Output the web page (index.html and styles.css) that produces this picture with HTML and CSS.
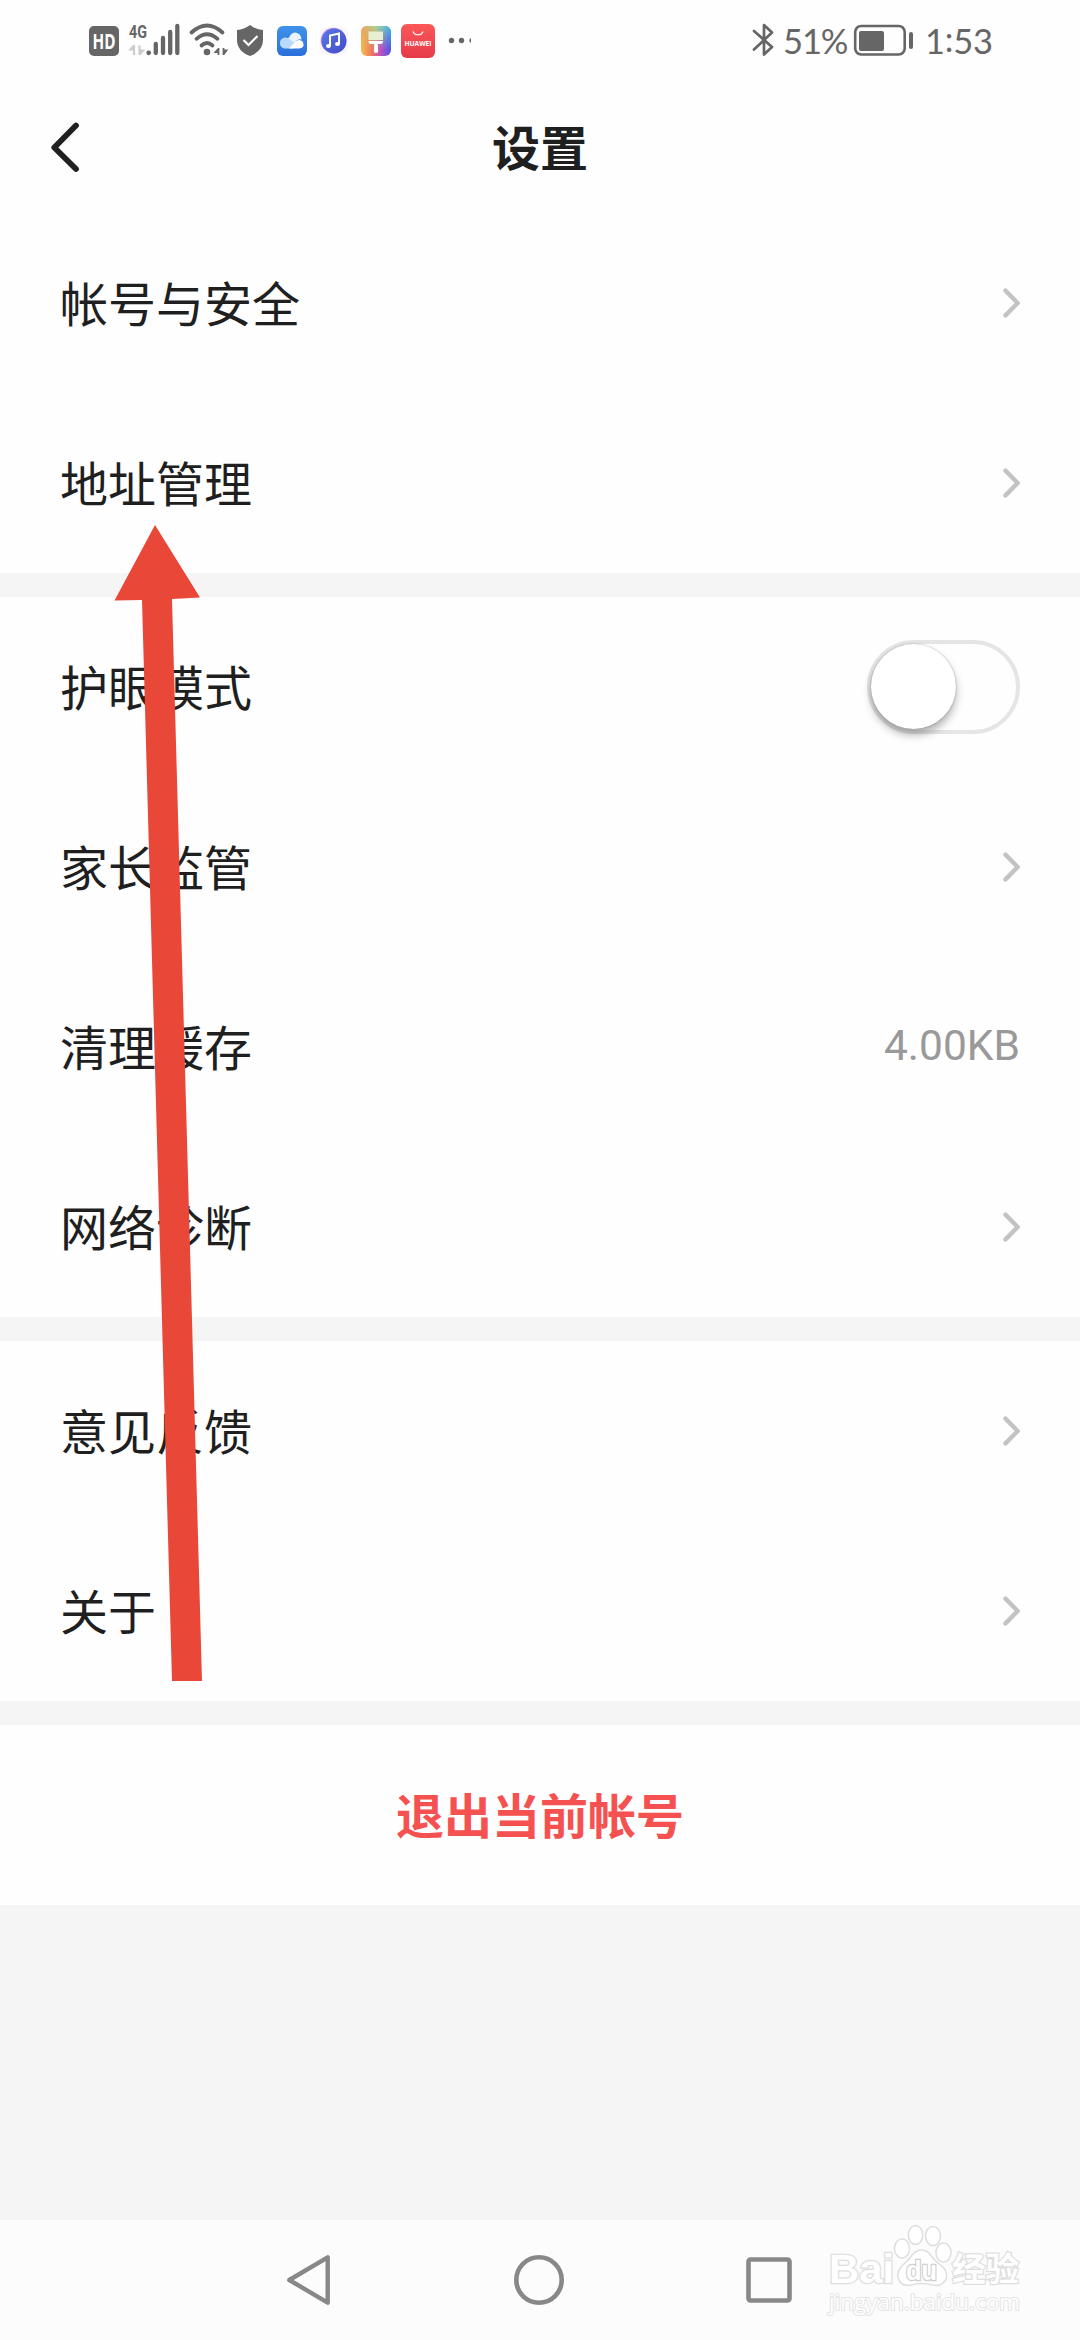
FILE: index.html
```html
<!DOCTYPE html>
<html lang="zh-CN">
<head>
<meta charset="utf-8">
<title>设置</title>
<link rel="stylesheet" href="styles.css">
</head>
<body>
<svg class="defs" width="0" height="0" aria-hidden="true">
  <defs>
    <linearGradient id="blue" x1="0" y1="0" x2="0" y2="1"><stop offset="0" stop-color="#3f93ea"/><stop offset="1" stop-color="#2a6fdc"/></linearGradient>
    <linearGradient id="red" x1="0" y1="0" x2="0" y2="1"><stop offset="0" stop-color="#fb5858"/><stop offset="1" stop-color="#e63a49"/></linearGradient>
    <linearGradient id="music" x1="0" y1="0" x2="1" y2="1"><stop offset="0" stop-color="#5a7be8"/><stop offset="1" stop-color="#4349c4"/></linearGradient>
    <linearGradient id="rainbow" x1="0" y1="0" x2="1" y2="0"><stop offset="0" stop-color="#f5c04c"/><stop offset=".35" stop-color="#f0785c"/><stop offset=".65" stop-color="#c04fc0"/><stop offset="1" stop-color="#4a55e8"/></linearGradient>
    <linearGradient id="rainbow-top" x1="0" y1="0" x2="1" y2="0"><stop offset="0" stop-color="#f0a060"/><stop offset=".5" stop-color="#a8d890"/><stop offset="1" stop-color="#38b8e8"/></linearGradient>
    <linearGradient id="fade" x1="0" y1="0" x2="0" y2="1"><stop offset="0" stop-color="#fff"/><stop offset=".8" stop-color="#000"/></linearGradient>
    <mask id="fade-mask"><rect x="361" y="26" width="30" height="30" fill="url(#fade)"/></mask>
    <symbol id="chevron" viewBox="0 0 18 30"><path d="M3.500 2.600 15.700 15 3.500 27.400" fill="none" stroke="#c3c3c3" stroke-width="4.400" stroke-linecap="round" stroke-linejoin="round"/></symbol>
  </defs>
</svg>

<div class="screen">
  <header class="status">
    <div class="status-left">
      <svg width="40" height="60" viewBox="85 10 40 60"><rect x="89" y="26" width="30" height="30" rx="5" fill="#666"/><text x="104" y="48.500" class="hd" text-anchor="middle" textLength="23" lengthAdjust="spacingAndGlyphs">HD</text></svg>
      <svg width="59" height="60" viewBox="125 10 59 60"><text x="129" y="38" class="net" textLength="18" lengthAdjust="spacingAndGlyphs">4G</text><path d="M134 45v10M134 45.500l-3.500 4h3.500M139.500 45.500v9.500M139.500 54.500l3.500-4h-3.500" stroke="#ccc" stroke-width="2.200" fill="#ccc"/><path d="M155.800 44v9M163 38v15M170.200 32v21M177.300 26v27" stroke="#666" stroke-width="4.300" stroke-linecap="round"/><circle cx="148.700" cy="52.800" r="2.400" fill="#666"/></svg>
      <svg width="47" height="60" viewBox="184 10 47 60"><g fill="none" stroke="#666" stroke-width="3.800" stroke-linecap="round"><path d="M191.500 32.500Q207 18.500 222.500 32.500M196.500 38.800Q207 29.500 217.500 38.800M201.500 45.500Q207 40.500 212.500 45.500"/></g><circle cx="207" cy="52" r="3.300" fill="#666"/><path d="M218.500 48v7M218.500 48.500l-3 3.500h3M223.500 48v7M223.500 54.500l3-4h-3" stroke="#666" stroke-width="1.800" fill="#666"/></svg>
      <svg width="42" height="60" viewBox="231 10 42 60"><path d="M250 25Q256 29.500 263 30V40Q263 51 250 56Q237 51 237 40V30Q244 29.500 250 25Z" fill="#666"/><path d="m243.500 40 5 5 9-9" fill="none" stroke="#fff" stroke-width="2.200"/></svg>
      <svg width="41" height="60" viewBox="273 10 41 60"><rect x="277" y="26" width="30" height="30" rx="6" fill="url(#blue)"/><path d="M286 48.500a5.500 5.500 0 1 1 1.500-10.500q5-3 9 2l-3 8.500z" fill="#b9dafa"/><path d="M289 48.500L296 41Q300 38.500 303 42Q305 48 299 48.500Z" fill="#fff"/><path d="M289 39Q290 33 295 32.500Q301 33 301.500 39.500Q298 38.500 294 42.500Z" fill="#e9f4fe"/></svg>
      <svg width="41" height="60" viewBox="314 10 41 60"><rect x="320" y="27" width="28" height="28" rx="6" fill="#f8f6fb"/><circle cx="333.500" cy="40.500" r="12.800" fill="#d68eed"/><circle cx="334" cy="41" r="12.500" fill="url(#music)"/><path d="M330 46V35.500L339 33.500V44" stroke="#fff" stroke-width="2" fill="none"/><ellipse cx="328.500" cy="46" rx="2.500" ry="2" fill="#fff"/><ellipse cx="337.500" cy="44" rx="2.500" ry="2" fill="#fff"/></svg>
      <svg width="41" height="60" viewBox="355 10 41 60"><rect x="361" y="26" width="30" height="30" rx="6" fill="url(#rainbow)"/><rect x="361" y="26" width="30" height="30" rx="6" fill="url(#rainbow-top)" mask="url(#fade-mask)"/><path d="M368.500 31.500h14.500v8.500h-14.500z" fill="#e8eed0"/><path d="M368.500 41h14.500q0 3-2.500 3h-2.800l.5 7q0 2-2.200 2t-2.200-2l.5-7h-3.300q-2.500 0-2.500-3z" fill="#fff"/></svg>
      <svg width="85" height="60" viewBox="396 10 85 60"><rect x="401" y="24" width="34" height="34" rx="6" fill="url(#red)"/><path d="M413 31.500a5.200 4.500 0 0 0 10 0" fill="none" stroke="#fff" stroke-width="1.200"/><text x="418" y="45.700" class="huawei" text-anchor="middle" textLength="27" lengthAdjust="spacingAndGlyphs">HUAWEI</text><g fill="#666"><circle cx="451.500" cy="40.500" r="2.700"/><circle cx="461.500" cy="40.500" r="2.700"/><path d="M471 38a2.700 2.700 0 0 0 0 5z"/></g></svg>
    </div>
    <div class="status-right">
      <svg width="33" height="60" viewBox="750 10 33 60"><path d="m754 31 18 16-8 7.500V25l8 7.500-18 17" fill="none" stroke="#666" stroke-width="2.700" stroke-linejoin="round" stroke-linecap="round"/></svg>
      <span class="clock percent">51%</span>
      <svg width="67" height="60" viewBox="851 10 67 60"><rect x="855.200" y="26" width="49.500" height="28.500" rx="6" fill="none" stroke="#666" stroke-width="2.600"/><rect x="859" y="31" width="25" height="20" rx="2" fill="#666"/><rect x="909" y="32" width="4" height="17" rx="2" fill="#666"/></svg>
      <span class="clock time">1<span class="colon">:</span>53</span>
    </div>
  </header>

  <div class="titlebar">
    <svg width="32" height="54" viewBox="0 0 32 54"><path d="M28 5.500 6.300 27.500 28 49" fill="none" stroke="#202020" stroke-width="5.800" stroke-linecap="round" stroke-linejoin="round"/></svg>
    <h1>设置</h1>
  </div>

  <main>
    <section class="group">
      <div class="row"><span class="label">帐号与安全</span><svg class="chev"><use href="#chevron"/></svg></div>
      <div class="row"><span class="label">地址管理</span><svg class="chev"><use href="#chevron"/></svg></div>
    </section>
    <section class="group">
      <div class="row"><span class="label">护眼模式</span><div class="switch"><div class="knob"></div></div></div>
      <div class="row"><span class="label">家长监管</span><svg class="chev"><use href="#chevron"/></svg></div>
      <div class="row"><span class="label">清理缓存</span><span class="value">4.00KB</span></div>
      <div class="row"><span class="label">网络诊断</span><svg class="chev"><use href="#chevron"/></svg></div>
    </section>
    <section class="group">
      <div class="row"><span class="label">意见反馈</span><svg class="chev"><use href="#chevron"/></svg></div>
      <div class="row"><span class="label">关于</span><svg class="chev"><use href="#chevron"/></svg></div>
    </section>
    <section class="group">
      <div class="row logout"><span class="label">退出当前帐号</span></div>
    </section>
  </main>

  <nav class="navbar">
    <svg width="50" height="54" viewBox="284 2253 50 54"><path d="M289.300 2280 327.700 2257.300V2302.700Z" fill="none" stroke="#888" stroke-width="4.400" stroke-linejoin="round"/></svg>
    <svg width="54" height="54" viewBox="0 0 54 54"><circle cx="27" cy="27" r="22.700" fill="none" stroke="#888" stroke-width="4.600"/></svg>
    <svg width="50" height="54" viewBox="0 0 50 54"><rect x="4.500" y="6.500" width="41" height="41" rx="2" fill="none" stroke="#888" stroke-width="4.600"/></svg>
  </nav>

  <svg class="arrow" width="90" height="1160" viewBox="112 522 90 1160"><path d="M155 525 200 597.500 172 599 202 1681H172L142 600 114.500 600.500Z" fill="#e94738"/></svg>

  <svg class="watermark" width="240" height="110" viewBox="820 2220 240 110">
    <g class="wm">
      <ellipse cx="902" cy="2248.500" rx="7.500" ry="9.500"/><ellipse cx="915.500" cy="2235" rx="7.200" ry="9.500"/><ellipse cx="933" cy="2236" rx="7.500" ry="9.500"/><ellipse cx="943.500" cy="2252.500" rx="7.500" ry="9.500"/>
      <path d="M922 2250Q928 2250 932 2257Q936 2262 943 2267Q948 2272 946 2279Q942 2287 933 2285Q922 2282 911 2285Q900 2287 898 2277Q897 2270 904 2264Q909 2260 912 2255Q916 2250 922 2250Z"/>
      <text x="829" y="2283" class="wm-brand" textLength="65" lengthAdjust="spacingAndGlyphs">Bai</text>
      <text x="906" y="2280" class="wm-du" textLength="31" lengthAdjust="spacingAndGlyphs">du</text>
      <text x="952" y="2281" class="wm-cn" textLength="67" lengthAdjust="spacingAndGlyphs">经验</text>
      <text x="829" y="2310" class="wm-url" textLength="191" lengthAdjust="spacingAndGlyphs">jingyan.baidu.com</text>
    </g>
  </svg>
</div>
</body>
</html>
```
FILE: styles.css
```css
* { box-sizing: border-box; }

body {
  margin: 0;
  background: #f5f5f5;
  color: #1f1f1f;
  font-family: Roboto, "Noto Sans CJK SC", sans-serif;
}

svg { display: block; flex: none; }
.defs { position: absolute; }

.screen {
  position: relative;
  display: flex;
  flex-direction: column;
  width: 1080px;
  height: 2340px;
  overflow: hidden;
}

.status {
  display: flex;
  justify-content: space-between;
  height: 81px;
  padding: 10px 82px 0 85px;
  background: #fefefe;
}
.status-left, .status-right { display: flex; }
.hd { font: 700 21px "Open Sans", sans-serif; fill: #fff; }
.net { font: 700 18px Roboto, sans-serif; fill: #666; }
.huawei { font: 700 7px "Open Sans", sans-serif; fill: #fff; }
.clock {
  flex: none;
  padding-top: 1px;
  color: #666;
  font: 400 34.5px/60px Lato, sans-serif;
  white-space: nowrap;
}
.percent { width: 68px; letter-spacing: -1.1px; }
.time { width: 80px; padding-left: 7px; letter-spacing: -.2px; }
.colon { display: inline-block; transform: translateY(-2px); }

.titlebar {
  display: grid;
  grid-template-columns: 1fr auto 1fr;
  align-items: center;
  height: 132px;
  padding: 0 48px;
  background: #fefefe;
}
.titlebar h1 {
  margin: 0;
  padding-top: 6px;
  font-size: 48px;
  line-height: 72px;
  font-weight: 700;
}

main { display: flex; flex-direction: column; gap: 24px; }
.group { background: #fefefe; }
.row {
  display: flex;
  align-items: center;
  justify-content: space-between;
  height: 180px;
  padding: 0 60px;
  font-size: 48px;
  line-height: 72px;
}
.label { padding-top: 6px; }
.chev { width: 18px; height: 30px; }
.value { padding-bottom: 2px; color: #999; font-size: 42.5px; }
.logout {
  justify-content: center;
  color: #f55151;
  font-weight: 700;
}

.switch {
  width: 153px;
  height: 94px;
  border: 4.5px solid #e5e5e5;
  border-radius: 47px;
}
.knob {
  width: 85px;
  height: 85px;
  border-radius: 50%;
  background: #fff;
  box-shadow: 0 0 2px rgba(0, 0, 0, .3), 0 6px 9px rgba(0, 0, 0, .3);
}

.navbar {
  display: flex;
  justify-content: space-between;
  height: 120px;
  margin-top: auto;
  padding: 33px 286px 0 284px;
  background: #fcfcfc;
}

.arrow { position: absolute; left: 112px; top: 522px; }
.watermark { position: absolute; left: 820px; top: 2220px; }
.wm { fill: #fff; stroke: #dedede; stroke-width: 1.500px; }
.wm text { paint-order: stroke; stroke-width: 2.500px; }
.wm-brand { font: 700 40px "Liberation Sans", sans-serif; }
.wm-cn { font: 700 33px "Noto Sans CJK SC", sans-serif; }
.wm-du { font: 700 27px "Liberation Sans", sans-serif; }
.wm .wm-du { stroke: #cfcfcf; }
.wm-url { font: 400 22px "Open Sans", sans-serif; }
.wm .wm-url { stroke: #e4e4e4; stroke-width: 2px; }
```
